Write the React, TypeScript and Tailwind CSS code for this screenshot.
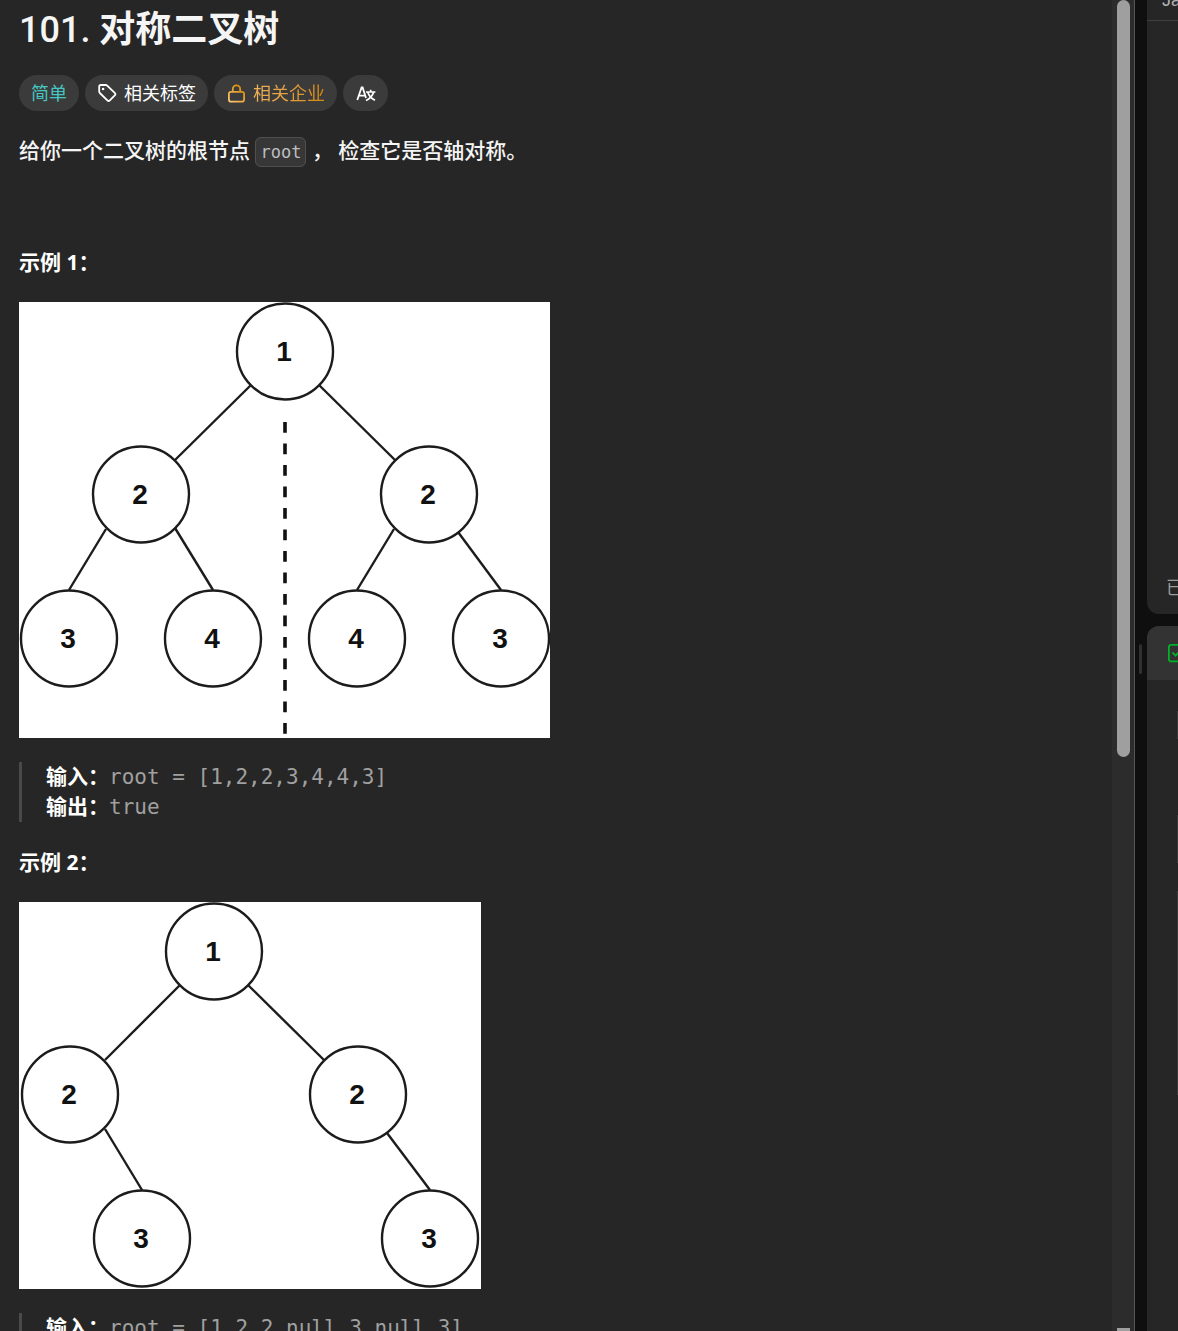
import type { ReactNode } from "react";

type Point = [number, number];
type TreeProps = {
  label: string;
  width: number;
  height: number;
  nodes: { at: Point; value: number }[];
  edges: [Point, Point][];
  axis?: [Point, Point];
};

function TreeFigure({ label, width, height, nodes, edges, axis }: TreeProps) {
  return (
    <svg role="img" aria-label={label} width={width} height={height} viewBox={`0 0 ${width} ${height}`} className="block max-w-full bg-white">
      <g stroke="#1c1c1c" strokeWidth="2.4" fill="none">
        {edges.map(([a, b], i) => (
          <line key={i} x1={a[0]} y1={a[1]} x2={b[0]} y2={b[1]} />
        ))}
        {nodes.map(({ at }, i) => (
          <circle key={i} cx={at[0]} cy={at[1]} r="48" />
        ))}
      </g>
      {axis && (
        <line x1={axis[0][0]} y1={axis[0][1]} x2={axis[1][0]} y2={axis[1][1]} stroke="#111" strokeWidth="3.6" strokeDasharray="10.8 10.7" />
      )}
      <g className="font-['Liberation_Sans',Arial,sans-serif] text-[28px] font-bold" fill="#111" textAnchor="middle">
        {nodes.map(({ at, value }, i) => (
          <text key={i} x={at[0] - 1} y={at[1] + 9}>{value}</text>
        ))}
      </g>
    </svg>
  );
}

function TagIcon() {
  return (
    <svg width="21" height="21" viewBox="0 0 21 21" fill="none" stroke="currentColor" strokeWidth="1.8" strokeLinejoin="round" aria-hidden="true">
      <path d="M2.2 3.6Q2.2 2 3.8 2H8.8Q9.6 2 10.2 2.6L18 10.2Q19 11.2 18 12.2L12.6 17.6Q11.6 18.5 10.6 17.6L2.8 10Q2.2 9.4 2.2 8.6Z" />
      <circle cx="6.1" cy="6" r="1.3" fill="currentColor" stroke="none" />
    </svg>
  );
}

function LockIcon() {
  return (
    <svg width="21" height="21" viewBox="0 0 21 21" fill="none" strokeWidth="1.8" aria-hidden="true">
      <defs>
        <linearGradient id="lock-gold" gradientUnits="userSpaceOnUse" x1="3" y1="19" x2="16" y2="4">
          <stop stopColor="#ffc878" />
          <stop offset="1" stopColor="#d68a09" />
        </linearGradient>
      </defs>
      <g stroke="url(#lock-gold)">
        <rect x="2.9" y="8.9" width="15.2" height="9.8" rx="2.2" />
        <path d="M6.8 8.8V6A3.7 3.7 0 0 1 14.2 6V8.8" />
      </g>
    </svg>
  );
}

function TranslateIcon() {
  return (
    <svg width="21" height="21" viewBox="0 0 21 21" fill="none" stroke="currentColor" strokeWidth="1.8" aria-hidden="true">
      <path d="M2.3 17L6.6 4.4H7.6L11 15M3.8 12.6H9.6" />
      <path d="M11 9H20.4M15.7 6.8V9M18.6 9.2Q17 14.6 11 17.4M12.8 9.2Q14.4 14.6 20 17.2" strokeWidth="1.7" />
    </svg>
  );
}

const pill = "flex h-9 items-center rounded-full bg-[#3b3b3b] px-3 text-[18px]";

function Example({ title, figure, children }: { title: string; figure: ReactNode; children: ReactNode }) {
  return (
    <section>
      <h2 className="mb-[25px] font-bold text-white">{title}</h2>
      {figure}
      <div className="mt-6 mb-[25px] border-l-3 border-[#4a4a4a] pl-6 font-['DejaVu_Sans_Mono','Noto_Sans_CJK_SC',monospace] text-[#a0a0a0]">{children}</div>
    </section>
  );
}

function Line({ name, children }: { name: string; children: ReactNode }) {
  return (
    <p className="h-[30px] leading-7 whitespace-nowrap">
      <strong className="font-['Noto_Sans','Noto_Sans_CJK_SC',sans-serif] text-white">{name}</strong>
      {children}
    </p>
  );
}

export default function App() {
  return (
    <div lang="zh-CN" className="flex h-screen overflow-hidden bg-[#0f0f0f] font-['Noto_Sans','Noto_Sans_CJK_SC',sans-serif] text-[21px] leading-[30px] text-[#f5f5f5]">
      <main className="min-w-0 flex-1 overflow-hidden bg-[#262626] px-[19px] pt-1">
        <h1 className="text-[36px] leading-[50px] font-bold">
          <span className="font-['Roboto',sans-serif] font-medium">101. </span>对称二叉树
        </h1>
        <div className="mt-5 flex gap-1.5">
          <span className={`${pill} text-[#46c6c2]`}>简单</span>
          <button type="button" className={`${pill} gap-1.5 text-white`}><TagIcon />相关标签</button>
          <button type="button" className={`${pill} gap-1.5`}>
            <LockIcon />
            <span className="bg-linear-to-r from-[#f0b35c] to-[#d68a09] bg-clip-text text-transparent">相关企业</span>
          </button>
          <button type="button" aria-label="翻译" className={`${pill} text-white`}><TranslateIcon /></button>
        </div>
        <p className="mt-6 font-medium">
          给你一个二叉树的根节点{" "}
          <code className="rounded-md border border-[#505050] bg-[#373737] px-1 py-1 font-['DejaVu_Sans_Mono',monospace] text-[17px] text-[#bdbdc0]">root</code>
          {" "}， 检查它是否轴对称。
        </p>
        <div className="mt-20">
          <Example
            title="示例 1："
            figure={
              <TreeFigure
                label="对称的二叉树"
                width={531}
                height={436}
                nodes={[
                  { at: [266, 49.5], value: 1 },
                  { at: [122, 192.5], value: 2 },
                  { at: [410, 192.5], value: 2 },
                  { at: [50, 336.5], value: 3 },
                  { at: [194, 336.5], value: 4 },
                  { at: [338, 336.5], value: 4 },
                  { at: [482, 336.5], value: 3 },
                ]}
                edges={[
                  [[232, 83], [156, 158]],
                  [[300, 83], [376, 158]],
                  [[87, 227], [50, 288]],
                  [[156, 226], [194, 288]],
                  [[375, 227], [338, 288]],
                  [[439, 230], [482, 288]],
                ]}
                axis={[[266, 120], [266, 432]]}
              />
            }
          >
            <Line name="输入：">root = [1,2,2,3,4,4,3]</Line>
            <Line name="输出：">true</Line>
          </Example>
          <Example
            title="示例 2："
            figure={
              <TreeFigure
                label="不对称的二叉树"
                width={462}
                height={387}
                nodes={[
                  { at: [195, 49.5], value: 1 },
                  { at: [51, 192.5], value: 2 },
                  { at: [339, 192.5], value: 2 },
                  { at: [123, 336.5], value: 3 },
                  { at: [411, 336.5], value: 3 },
                ]}
                edges={[
                  [[161, 83], [86, 158]],
                  [[229, 83], [305, 158]],
                  [[86, 227], [123, 288]],
                  [[368, 231], [411, 288]],
                ]}
              />
            }
          >
            <Line name="输入：">root = [1,2,2,null,3,null,3]</Line>
          </Example>
        </div>
      </main>

      <div className="flex w-[23px] shrink-0 flex-col items-center justify-between border-r border-[#555] bg-[#2c2c2c]">
        <div className="h-[757px] w-[13px] rounded-full bg-[#9f9f9f]" />
        <div className="h-[3px] w-[13px] bg-[#9f9f9f]" />
      </div>

      <div className="flex w-3 shrink-0 items-center pb-3.5 pl-1">
        <div className="h-[30px] w-[3px] rounded-full bg-[#303030]" />
      </div>

      <aside className="flex w-[31px] shrink-0 flex-col gap-3 overflow-hidden">
        <section className="flex h-[614px] shrink-0 flex-col justify-between overflow-hidden rounded-bl-xl bg-[#262626]">
          <div className="flex h-[21px] items-end overflow-hidden border-b border-[#404040] pl-[15px] font-['Liberation_Sans',sans-serif] text-[18px] text-[#b0b0b0]">
            <span className="pb-2.5 leading-5">Java</span>
          </div>
          <div className="h-[41px] overflow-hidden pl-[19px] text-[18px] leading-7 whitespace-nowrap text-[#9c9c9c]">已存储</div>
        </section>
        <section className="flex flex-1 flex-col overflow-hidden rounded-tl-xl bg-[#262626]">
          <div className="flex h-[54px] shrink-0 items-center bg-[#333] pl-5">
            <svg width="21" height="21" viewBox="0 0 21 21" fill="none" stroke="#02b128" strokeWidth="1.8" className="shrink-0" aria-hidden="true">
              <rect x="1.9" y="1.9" width="17" height="16.5" rx="2" />
              <path d="M5.5 9.5L8.6 12.6L14 7" />
            </svg>
          </div>
          <div className="flex flex-col items-end pt-[31px]">
            <div className="h-7 w-px bg-[#3a3a3a]" />
            <div className="mt-[76px] h-12 w-px bg-[#3a3a3a]" />
            <div className="mt-7 h-[204px] w-px bg-[#3a3a3a]" />
          </div>
        </section>
      </aside>
    </div>
  );
}
